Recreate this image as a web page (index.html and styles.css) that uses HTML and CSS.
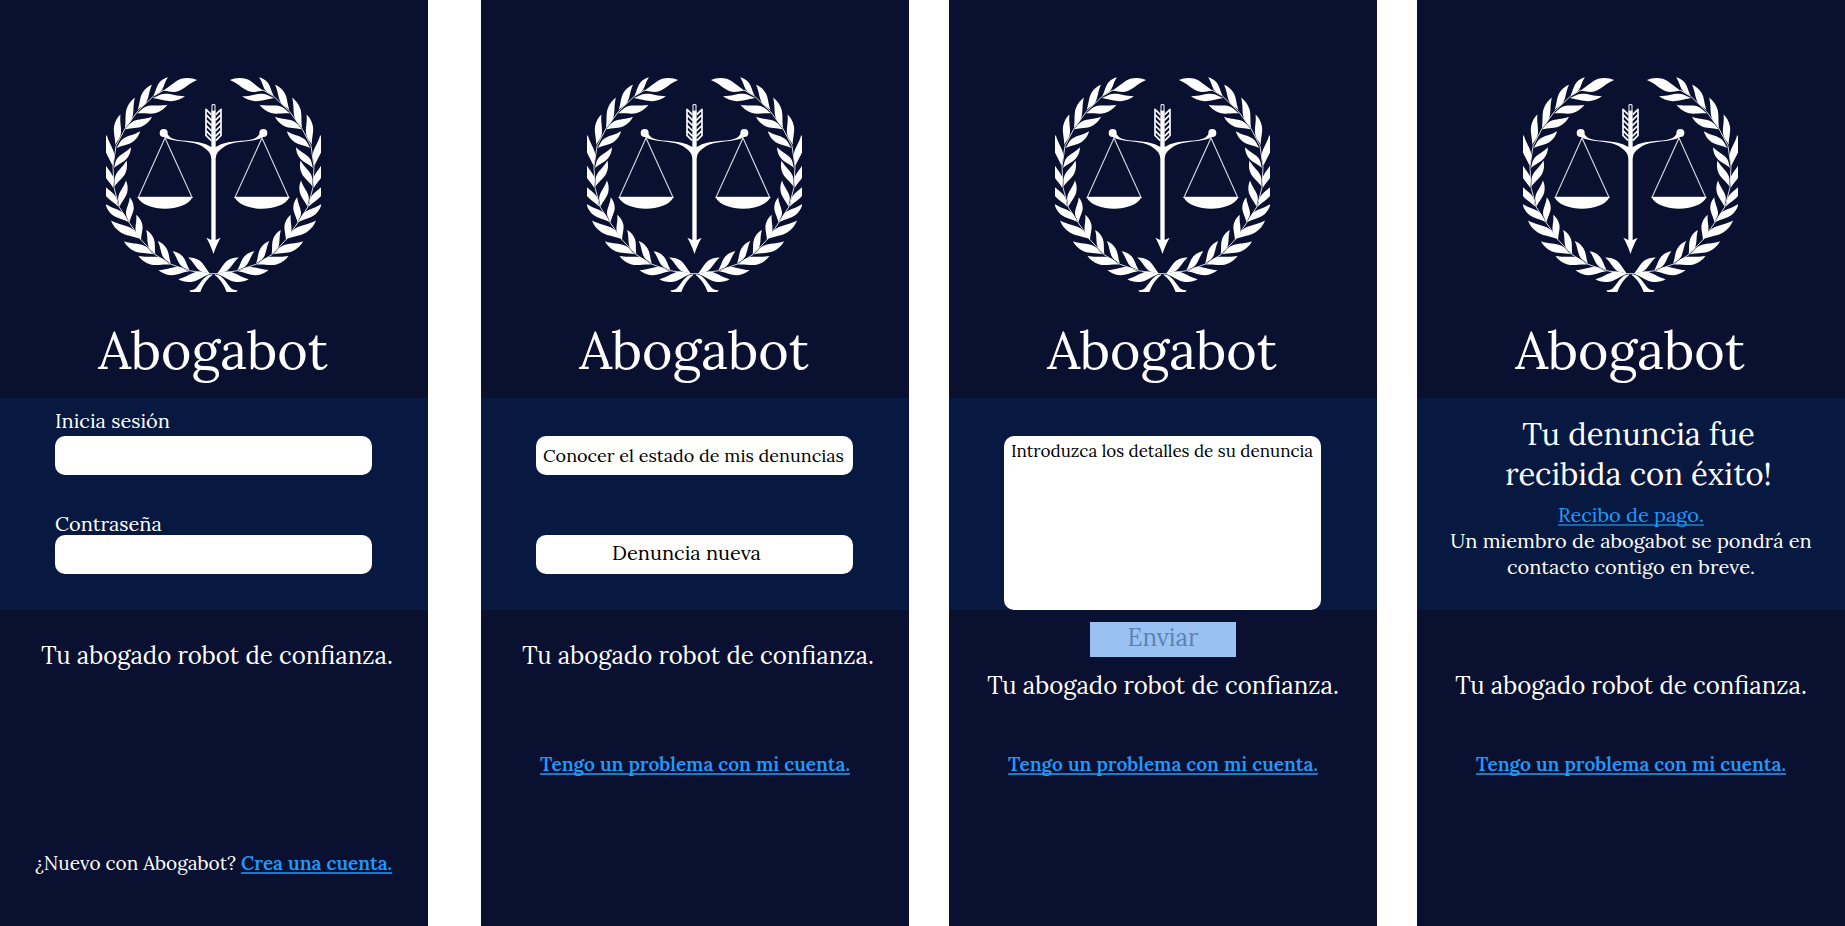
FILE: index.html
```html
<!DOCTYPE html>
<html lang="es">
<head>
<meta charset="utf-8">
<title>Abogabot</title>
<link rel="stylesheet" href="styles.css">
</head>
<body>
<svg class="defs" aria-hidden="true">
  <defs>
    <path id="leaf" d="M0 0C.14 .03 .22 .135 .4 .135C.6 .13 .75 .03 1.030 .01C.92 -.08 .78 -.145 .6 -.15C.42 -.15 .25 -.05 0 0Z"/>
    <g id="half">
      <!-- outer leaves -->
      <use href="#leaf" transform="matrix(98 -32 36 108 220 92)"/>
      <use href="#leaf" transform="matrix(42 -55 55 42 190 108)"/>
      <use href="#leaf" transform="matrix(41 -74 74 41 143 150)"/>
      <use href="#leaf" transform="matrix(28 -90 80 25 105 205)"/>
      <use href="#leaf" transform="matrix(14 -89 82 13 76 255)"/>
      <use href="#leaf" transform="matrix(-18 -90 84 -17 68 318)"/>
      <use href="#leaf" transform="matrix(-28 -76 76 -28 70 384)"/>
      <use href="#leaf" transform="matrix(-46 -66 66 -46 85 440)"/>
      <use href="#leaf" transform="matrix(-68 -52 52 -68 116 486)"/>
      <use href="#leaf" transform="matrix(-87 -53 50 -82 152 537)"/>
      <use href="#leaf" transform="matrix(-88 -37 37 -88 192 583)"/>
      <use href="#leaf" transform="matrix(-93 -24 24 -93 241 614)"/>
      <use href="#leaf" transform="matrix(-90 -3 3 -90 298 634)"/>
      <use href="#leaf" transform="matrix(-92 17 -17 -92 360 641)"/>
      <!-- inner leaves -->
      <use href="#leaf" transform="matrix(94 -4 -3 -80 188 114)"/>
      <use href="#leaf" transform="matrix(90 -24 -24 -90 140 160)"/>
      <use href="#leaf" transform="matrix(80 -36 -36 -80 104 208)"/>
      <use href="#leaf" transform="matrix(70 -48 -48 -70 79 264)"/>
      <use href="#leaf" transform="matrix(51 -60 -60 -51 71 324)"/>
      <use href="#leaf" transform="matrix(36 -76 -76 -36 73 380)"/>
      <use href="#leaf" transform="matrix(20 -77 -77 -20 88 441)"/>
      <use href="#leaf" transform="matrix(2 -74 -80 -2 118 488)"/>
      <use href="#leaf" transform="matrix(-13 -75 -80 14 153 541)"/>
      <use href="#leaf" transform="matrix(-26 -72 -76 27 196 584)"/>
      <use href="#leaf" transform="matrix(-38 -67 -67 38 243 612)"/>
      <use href="#leaf" transform="matrix(-49 -56 -58 51 299 631)"/>
      <use href="#leaf" transform="matrix(-63 -48 -50 65 360 641)"/>
      <!-- stem and ribbon -->
      <path class="stem" d="M222 90L190 109L143 154L105 206L78 258L69 320L72 382L87 440L117 487L152 538L194 583L241 612L298 632L358 641H371"/>
      <path d="M366 643L356 645C336 654 328 676 316 686C310 690 304 690 298 691L302 696H331C338 680 345 663 366 646Z"/>
      <!-- beam, fletching and pan -->
      <circle cx="221" cy="219" r="12"/>
      <path d="M226 213C236 228 240 235 260 239C300 245 332 242 358 258L371 264V294H364C362 276 350 268 335 258C312 244 262 246 238 238C230 235 224 232 219 230Z"/>
      <path class="string" d="M225 234L145 412H306Z"/>
      <path d="M142 411H308C284 458 166 458 142 411Z"/>
      <path class="feather" d="M348 146V226L364 242M348 148L364 164M348 164L365 181M348 180L365 197M348 196L365 213M348 212L365 229"/>
    </g>
    <symbol id="logo" viewBox="48 48 645 651">
      <use href="#half"/>
      <use href="#half" transform="translate(741 0) scale(-1 1)"/>
      <path d="M364 152H377V540H364Z"/>
      <path class="nock" d="M366 134H375V154H366Z"/>
      <path d="M349 533L364 540H377L392 533C383 548 376 565 370.500 582C365 565 358 548 349 533Z"/>
    </symbol>
  </defs>
</svg>

<main class="screens">
  <section class="screen login">
    <header class="brand"><svg class="logo"><use href="#logo"/></svg><h1>Abogabot</h1></header>
    <form class="band">
      <label class="label user" for="user">Inicia sesión</label>
      <input class="box" id="user" type="text">
      <label class="label pass" for="pass">Contraseña</label>
      <input class="box" id="pass" type="password">
    </form>
    <p class="tagline">Tu abogado robot de confianza.</p>
    <p class="signup">¿Nuevo con Abogabot? <a class="link" href="#">Crea una cuenta.</a></p>
  </section>

  <section class="screen menu">
    <header class="brand"><svg class="logo"><use href="#logo"/></svg><h1>Abogabot</h1></header>
    <div class="band">
      <button class="box status">Conocer el estado de mis denuncias</button>
      <button class="box new">Denuncia nueva</button>
    </div>
    <p class="tagline">Tu abogado robot de confianza.</p>
    <p class="help"><a class="link" href="#">Tengo un problema con mi cuenta.</a></p>
  </section>

  <section class="screen report">
    <header class="brand"><svg class="logo"><use href="#logo"/></svg><h1>Abogabot</h1></header>
    <div class="band">
      <div class="box details">Introduzca los detalles de su denuncia</div>
    </div>
    <button class="send">Enviar</button>
    <p class="tagline">Tu abogado robot de confianza.</p>
    <p class="help"><a class="link" href="#">Tengo un problema con mi cuenta.</a></p>
  </section>

  <section class="screen done">
    <header class="brand"><svg class="logo"><use href="#logo"/></svg><h1>Abogabot</h1></header>
    <div class="band">
      <h2>Tu denuncia fue<br>recibida con éxito!</h2>
      <a class="receipt" href="#">Recibo de pago.</a>
      <p class="note">Un miembro de abogabot se pondrá en<br>contacto contigo en breve.</p>
    </div>
    <p class="tagline">Tu abogado robot de confianza.</p>
    <p class="help"><a class="link" href="#">Tengo un problema con mi cuenta.</a></p>
  </section>
</main>
</body>
</html>
```

FILE: styles.css
```css
* { box-sizing: border-box; }

body {
  margin: 0;
  background: #fff;
  color: #fff;
  font-family: "Lora", "Liberation Serif", serif;
  overflow: hidden;
}

h1, h2, p { margin: 0; font-weight: 400; }

.defs { display: block; width: 0; height: 0; }
.stem { fill: none; stroke: #fff; stroke-width: 2.5; }
.string { fill: none; stroke: #d4d6de; stroke-width: 3.5; }
.feather { fill: none; stroke: #fff; stroke-width: 5; }
.nock { fill: none; stroke: #fff; stroke-width: 3; }

.screens { display: flex; height: 926px; }

.screen {
  display: flex;
  flex-direction: column;
  width: 428px;
  flex: none;
  background: #0a1030;
}
.menu { margin-left: 53px; }
.report, .done { margin-left: 40px; }

.brand { height: 398px; padding-top: 76px; }
.logo { display: block; width: 215px; height: 217px; margin-left: 106px; fill: #fff; }

h1 {
  margin-top: 27px;
  padding-right: 2px;
  font-size: 52px;
  line-height: 60px;
  text-align: center;
}

.band {
  display: flex;
  flex-direction: column;
  height: 212px;
  padding: 38px 56px 0 55px;
  background: #071940;
}
.login .band { padding-top: 11px; }

.label { font-size: 20px; line-height: 23px; }
.user { margin-bottom: 4px; }
.pass { margin-top: 37px; }

.box {
  display: block;
  flex: none;
  width: 317px;
  height: 39px;
  padding: 0;
  border: 0;
  border-radius: 10px;
  background: #fff;
  color: #000;
  font-family: inherit;
  text-align: center;
  white-space: nowrap;
}
.status { padding-right: 2px; font-size: 18px; line-height: 39px; }
.new { margin-top: 60px; padding: 0 16px 4px 0; font-size: 20px; line-height: 35px; }
.details {
  height: 174px;
  padding-left: 7px;
  font-size: 17px;
  line-height: 30px;
  text-align: left;
}

.tagline {
  margin-top: 31px;
  font-size: 24px;
  line-height: 30px;
  text-align: center;
}
.login .tagline { padding-left: 6px; }
.menu .tagline { padding-left: 6px; }
.report .tagline { margin-top: 14px; }
.done .tagline { margin-top: 61px; }

.send {
  align-self: center;
  width: 146px;
  height: 35px;
  margin-top: 12px;
  padding: 0 0 4px;
  border: 0;
  background: #99c1f1;
  color: #5b82b2;
  font: 24px/31px "Lora", "Liberation Serif", serif;
}

.help, .signup { font-size: 19px; line-height: 24px; white-space: nowrap; }
.help { margin-top: 51px; text-align: center; }
.menu .help { margin-top: 81px; }
.signup { margin-top: 180px; padding-left: 35px; }

.link {
  color: #1e9bff;
  font-weight: 600;
  text-decoration: underline;
  text-decoration-color: #187bcc;
  text-decoration-thickness: 2px;
  text-underline-offset: 2px;
  text-decoration-skip-ink: none;
}

.done .band { align-items: center; padding: 16px 0 0; text-align: center; }
h2 { padding-left: 15px; font-size: 31px; line-height: 40px; }
.receipt {
  margin-top: 8px;
  color: #1e9bff;
  font-size: 20px;
  line-height: 26px;
  text-decoration-color: #1565ab;
  text-decoration-thickness: 2px;
  text-underline-offset: 2px;
  text-decoration-skip-ink: none;
}
.note { font-size: 20px; line-height: 26px; white-space: nowrap; }
```
